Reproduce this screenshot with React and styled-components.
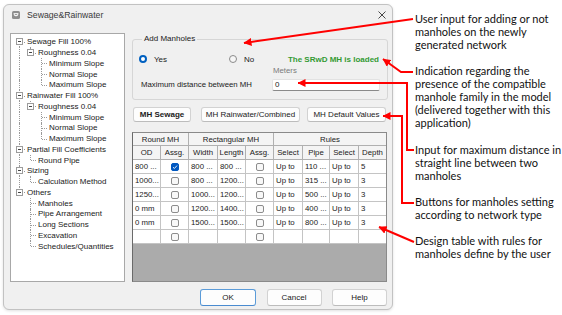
import React from 'react';
import styled, { createGlobalStyle } from 'styled-components';

const Global = createGlobalStyle`
  *, *::before, *::after { box-sizing: border-box; }
  html, body { margin: 0; padding: 0; background: #fff; }
  body { width: 562px; height: 315px; overflow: hidden; font-family: "Liberation Sans", Arial, sans-serif; color: #1a1a1a; }
`;

const Page = styled.div`
  position: relative;
  width: 562px;
  height: 315px;
  display: flex;
  align-items: flex-start;
`;

const Dialog = styled.div`
  margin: 4px 0 0 3px;
  width: 390px;
  height: 306px;
  border: 1px solid #c2c2c2;
  border-radius: 6px;
  background: #f0f0f0;
  display: flex;
  flex-direction: column;
  box-shadow: 0 1px 3px rgba(0, 0, 0, 0.12);
`;

const TitleBar = styled.div`
  height: 20px;
  display: flex;
  align-items: center;
  padding: 0 6px 0 8px;
`;

const TitleText = styled.span`
  margin-left: 7px;
  font-size: 8.7px;
  color: #3a3a3a;
  flex: 1;
`;

const Body = styled.div`
  display: flex;
  gap: 7px;
  padding: 8px 4px 0 6px;
`;

const TreeBox = styled.div`
  width: 115px;
  height: 249px;
  background: #fff;
  border: 1px solid #a8a8a8;
  padding: 2.5px 0 0 3px;
`;

const TreeRowEl = styled.div`
  height: 10.75px;
  display: flex;
  align-items: center;
  font-size: 8px;
  white-space: nowrap;
`;

const Gutter = styled.span`
  position: relative;
  width: 11px;
  height: 100%;
  flex: none;
  &::before {
    content: '';
    position: absolute;
    left: 5px;
    top: ${p => (p.$v === 'bottom' ? '50%' : '0')};
    bottom: ${p => (p.$v === 'top' ? '50%' : '0')};
    border-left: 1px dotted #9a9a9a;
    display: ${p => (p.$v ? 'block' : 'none')};
  }
  &::after {
    content: '';
    position: absolute;
    left: 6px;
    right: 0;
    top: 50%;
    border-top: 1px dotted #9a9a9a;
    display: ${p => (p.$h ? 'block' : 'none')};
  }
`;

const Expander = styled.span`
  position: absolute;
  left: 2px;
  top: calc(50% - 3.5px);
  width: 7px;
  height: 7px;
  border: 1px solid #9c9c9c;
  background: #fff;
  z-index: 1;
  &::after {
    content: '';
    position: absolute;
    left: 1px;
    right: 1px;
    top: 2px;
    border-top: 1px solid #444;
  }
`;

const TreeLabel = styled.span`
  margin-left: 2px;
  color: #1a1a1a;
`;

const RightPanel = styled.div`
  width: 256px;
  display: flex;
  flex-direction: column;
`;

const Group = styled.fieldset`
  margin: 0;
  height: 67px;
  border: 1px solid #d6d6d6;
  border-radius: 3px;
  padding: 0 7px 0 6px;
`;

const Legend = styled.legend`
  margin-left: 3px;
  padding: 0 2px;
  font-size: 8px;
  line-height: 12px;
  color: #1a1a1a;
`;

const RadioLine = styled.div`
  margin-top: 8px;
  height: 12px;
  display: flex;
  align-items: center;
  font-size: 8px;
`;

const RadioItem = styled.label`
  display: flex;
  align-items: center;
  width: ${p => p.$w || 'auto'};
  gap: 7px;
`;

const RadioDot = styled.span`
  width: 8px;
  height: 8px;
  border-radius: 50%;
  flex: none;
  background: ${p => (p.$on ? '#fff' : '#f6f6f6')};
  border: ${p => (p.$on ? '2.5px solid #0060c0' : '1px solid #8a8a8a')};
`;

const Loaded = styled.span`
  margin-left: auto;
  margin-right: 1px;
  font-size: 8px;
  font-weight: bold;
  color: #339a33;
`;

const DistanceLine = styled.div`
  margin-top: 1px;
  display: flex;
  align-items: flex-end;
  font-size: 7.8px;
`;

const DistanceLabel = styled.span`
  line-height: 12px;
  margin-left: 2px;
`;

const MetersCol = styled.div`
  margin-left: auto;
  width: 108px;
  display: flex;
  flex-direction: column;
`;

const Meters = styled.span`
  line-height: 10px;
  margin-left: 1px;
  color: #7a7a7a;
  font-size: 7.8px;
`;

const Input = styled.div`
  margin-top: 3px;
  height: 12px;
  background: #fff;
  border: 1px solid #e2e2e2;
  border-bottom-color: #8a8a8a;
  border-radius: 2px;
  padding-left: 2px;
  font-size: 8px;
  line-height: 10px;
`;

const ButtonRow = styled.div`
  margin-top: 7px;
  display: flex;
  padding-left: 1px;
`;

const Btn = styled.div`
  width: ${p => p.$w}px;
  height: ${p => p.$h || 15}px;
  margin-left: ${p => p.$ml || 0}px;
  background: #fdfdfd;
  border: 1px solid ${p => (p.$primary ? '#5b9bd8' : '#d2d2d2')};
  border-bottom-color: ${p => (p.$primary ? '#4a8bd0' : '#bcbcbc')};
  border-radius: 3px;
  display: flex;
  align-items: center;
  justify-content: center;
  font-size: 8px;
  font-weight: ${p => (p.$bold ? 'bold' : 'normal')};
  color: #1a1a1a;
  white-space: nowrap;
`;

const TableBox = styled.div`
  margin-top: 10px;
  width: 255px;
  height: 150px;
  border: 1px solid #8a8a8a;
  border-left-color: #6a6a6a;
  background: #ababab;
`;

const Grid = styled.div`
  display: grid;
  grid-template-columns: 28px 28px 29px 28px 28px 29px 27px 29px 27px;
  grid-template-rows: 13px repeat(7, 14px);
  background: #fff;
`;

const HeadCell = styled.div`
  grid-column: span ${p => p.$span || 1};
  background: #f4f4f4;
  border-right: ${p => (p.$last ? 'none' : '1px solid #b0b0b0')};
  border-bottom: 1px solid #b0b0b0;
  display: flex;
  align-items: center;
  justify-content: center;
  font-size: 7.8px;
  color: #222;
  white-space: nowrap;
  overflow: hidden;
`;

const Cell = styled.div`
  border-right: ${p => (p.$last ? 'none' : '1px solid #c4c4c4')};
  border-bottom: 1px solid #c4c4c4;
  display: flex;
  align-items: center;
  justify-content: ${p => (p.$center ? 'center' : 'flex-start')};
  padding-left: ${p => (p.$center ? 0 : 2)}px;
  font-size: 7.8px;
  white-space: nowrap;
  overflow: hidden;
`;

const Check = styled.span`
  width: 8px;
  height: 8px;
  border-radius: 2px;
  display: flex;
  align-items: center;
  justify-content: center;
  background: ${p => (p.$on ? '#0058c0' : '#f8f8f8')};
  border: 1px solid ${p => (p.$on ? '#0058c0' : '#8c8c8c')};
`;

const Footer = styled.div`
  margin-top: 7px;
  display: flex;
  justify-content: flex-end;
  gap: 10.5px;
  padding-right: 5px;
`;

const Notes = styled.div`
  margin-left: 22px;
  padding-top: 12px;
  font-family: Lato, "Liberation Sans", sans-serif;
  font-size: 11px;
  line-height: 13px;
  color: #111;
`;

const Note = styled.div`
  margin-top: ${p => (p.$first ? 0 : 13.3)}px;
  white-space: nowrap;
`;

const Overlay = styled.svg`
  position: absolute;
  left: 0;
  top: 0;
  pointer-events: none;
`;

const tree = [
  { t: 'Sewage Fill 100%', l: 0, node: true, first: true },
  { t: 'Roughness 0.04', l: 1, node: true, last: true, g: [true] },
  { t: 'Minimum Slope', l: 2, g: [true, false] },
  { t: 'Normal Slope', l: 2, g: [true, false] },
  { t: 'Maximum Slope', l: 2, last: true, g: [true, false] },
  { t: 'Rainwater Fill 100%', l: 0, node: true },
  { t: 'Roughness 0.04', l: 1, node: true, last: true, g: [true] },
  { t: 'Minimum Slope', l: 2, g: [true, false] },
  { t: 'Normal Slope', l: 2, g: [true, false] },
  { t: 'Maximum Slope', l: 2, last: true, g: [true, false] },
  { t: 'Partial Fill Coefficients', l: 0, node: true },
  { t: 'Round Pipe', l: 1, last: true, g: [true] },
  { t: 'Sizing', l: 0, node: true },
  { t: 'Calculation Method', l: 1, last: true, g: [true] },
  { t: 'Others', l: 0, node: true, last: true },
  { t: 'Manholes', l: 1, g: [false] },
  { t: 'Pipe Arrangement', l: 1, g: [false] },
  { t: 'Long Sections', l: 1, g: [false] },
  { t: 'Excavation', l: 1, g: [false] },
  { t: 'Schedules/Quantities', l: 1, last: true, g: [false] },
];

const rows = [
  ['800 ...', true, '800 ...', '800 ...', false, 'Up to', '110 ...', 'Up to', '5'],
  ['1000...', false, '800 ...', '1200...', false, 'Up to', '315 ...', 'Up to', '3'],
  ['1250...', false, '1000...', '1200...', false, 'Up to', '500 ...', 'Up to', '3'],
  ['0 mm', false, '1200...', '1400...', false, 'Up to', '400 ...', 'Up to', '3'],
  ['0 mm', false, '1500...', '1500...', false, 'Up to', '800 ...', 'Up to', '3'],
  ['', false, '', '', false, '', '', '', ''],
];

const notes = [
  ['User input for adding or not', 'manholes on the newly', 'generated network'],
  ['Indication regarding the', 'presence of the compatible', 'manhole family in the model', '(delivered together with this', 'application)'],
  ['Input for maximum distance in', 'straight  line between two', 'manholes'],
  ['Buttons for manholes setting', 'according to network type'],
  ['Design table with rules for', 'manholes define by the user'],
];

function TreeRow({ r }) {
  const gutters = [];
  (r.g || []).forEach((on, i) => gutters.push(<Gutter key={i} $v={on ? 'full' : null} />));
  const v = r.first ? 'bottom' : r.last ? 'top' : 'full';
  gutters.push(
    <Gutter key="own" $v={v} $h>
      {r.node && <Expander />}
    </Gutter>
  );
  return (
    <TreeRowEl>
      {gutters}
      <TreeLabel>{r.t}</TreeLabel>
    </TreeRowEl>
  );
}

function AppIcon() {
  return (
    <svg width="8" height="8" viewBox="0 0 8 8">
      <rect x="0" y="0" width="8" height="8" rx="1.6" fill="#8e8e8e" />
      <path d="M2 3.2 Q4 6.4 6 3.2" stroke="#fff" strokeWidth="1.1" fill="none" />
      <rect x="1.6" y="2.2" width="4.8" height="0.9" fill="#fff" />
    </svg>
  );
}

function CloseIcon() {
  return (
    <svg width="8" height="8" viewBox="0 0 8 8">
      <path d="M0.5 0.5 L7.5 7.5 M7.5 0.5 L0.5 7.5" stroke="#333" strokeWidth="0.9" />
    </svg>
  );
}

function Tick() {
  return (
    <svg width="6" height="6" viewBox="0 0 6 6">
      <path d="M1 3.2 L2.4 4.5 L5 1.6" stroke="#fff" strokeWidth="0.9" fill="none" />
    </svg>
  );
}

export default function App() {
  return (
    <Page>
      <Global />
      <Dialog>
        <TitleBar>
          <AppIcon />
          <TitleText>Sewage&amp;Rainwater</TitleText>
          <CloseIcon />
        </TitleBar>
        <Body>
          <TreeBox>
            {tree.map((r, i) => (
              <TreeRow key={i} r={r} />
            ))}
          </TreeBox>
          <RightPanel>
            <Group>
              <Legend>Add Manholes</Legend>
              <RadioLine>
                <RadioItem $w="90px">
                  <RadioDot $on />
                  Yes
                </RadioItem>
                <RadioItem>
                  <RadioDot />
                  No
                </RadioItem>
                <Loaded>The SRwD MH is loaded</Loaded>
              </RadioLine>
              <DistanceLine>
                <DistanceLabel>Maximum distance between MH</DistanceLabel>
                <MetersCol>
                  <Meters>Meters</Meters>
                  <Input>0</Input>
                </MetersCol>
              </DistanceLine>
            </Group>
            <ButtonRow>
              <Btn $w={58} $bold>MH Sewage</Btn>
              <Btn $w={99} $ml={10}>MH Rainwater/Combined</Btn>
              <Btn $w={79} $ml={7}>MH Default Values</Btn>
            </ButtonRow>
            <TableBox>
              <Grid>
                <HeadCell $span={2}>Round MH</HeadCell>
                <HeadCell $span={3}>Rectangular MH</HeadCell>
                <HeadCell $span={4} $last>Rules</HeadCell>
                {['OD', 'Assg.', 'Width', 'Length', 'Assg.', 'Select', 'Pipe', 'Select', 'Depth'].map((h, i) => (
                  <HeadCell key={i} $last={i === 8}>{h}</HeadCell>
                ))}
                {rows.map((row, ri) =>
                  row.map((c, ci) =>
                    typeof c === 'boolean' ? (
                      <Cell key={ri + '-' + ci} $center>
                        <Check $on={c}>{c && <Tick />}</Check>
                      </Cell>
                    ) : (
                      <Cell key={ri + '-' + ci} $last={ci === 8}>{c}</Cell>
                    )
                  )
                )}
              </Grid>
            </TableBox>
          </RightPanel>
        </Body>
        <Footer>
          <Btn $w={56} $h={17} $primary>OK</Btn>
          <Btn $w={55} $h={17}>Cancel</Btn>
          <Btn $w={55} $h={17}>Help</Btn>
        </Footer>
      </Dialog>
      <Notes>
        {notes.map((n, i) => (
          <Note key={i} $first={i === 0}>
            {n.map((line, j) => (
              <div key={j}>{line}</div>
            ))}
          </Note>
        ))}
      </Notes>
      <Overlay width="562" height="315" viewBox="0 0 562 315">
        <defs>
          <marker id="ah" markerWidth="8" markerHeight="8" refX="7.5" refY="4" orient="auto" markerUnits="userSpaceOnUse">
            <path d="M0,0 L8,4 L0,8 z" fill="#f00" />
          </marker>
        </defs>
        <g stroke="#f00" strokeWidth="2" fill="none" strokeLinejoin="miter">
          <polyline points="413,19 244,43" markerEnd="url(#ah)" />
          <polyline points="413,72 401,72 383,59" markerEnd="url(#ah)" />
          <polyline points="414,150 407,150 407,83 298,83" markerEnd="url(#ah)" />
          <polyline points="414,203 402,203 402,116 383,116" markerEnd="url(#ah)" />
          <polyline points="414,242 379,227" markerEnd="url(#ah)" />
        </g>
      </Overlay>
    </Page>
  );
}
